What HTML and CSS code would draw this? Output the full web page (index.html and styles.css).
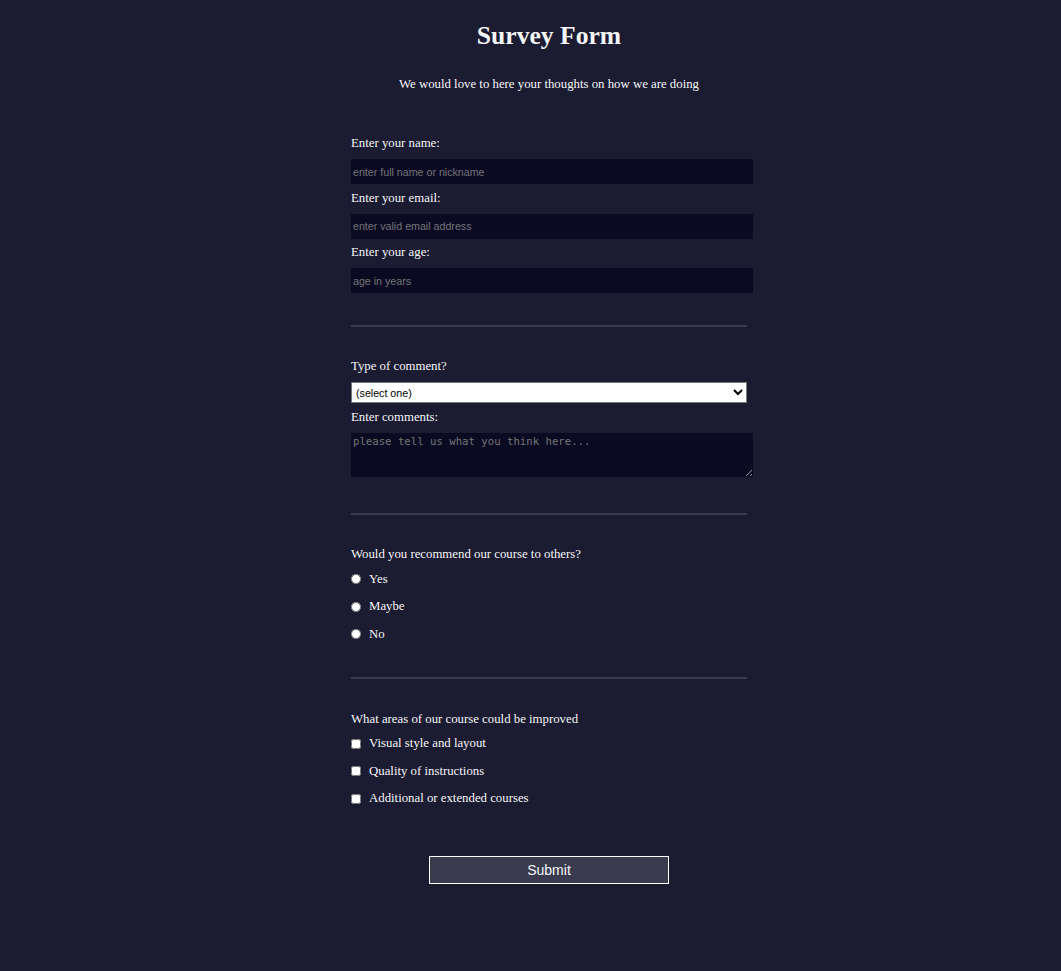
FILE: index.html
```html
<!DOCTYPE html>
<html lang="en">
<head>
<meta charset="utf-8">
<title>Survey Form</title>
<link rel="stylesheet" href="styles.css">
</head>
<body>
<main class="page">
  <h1 class="title">Survey Form</h1>
  <p class="subtitle">We would love to here your thoughts on how we are doing</p>
  <form class="survey">
    <section class="group group-info">
      <label class="field-label" for="name">Enter your name:</label>
      <input class="text-input" id="name" type="text" placeholder="enter full name or nickname">
      <label class="field-label" for="email">Enter your email:</label>
      <input class="text-input" id="email" type="email" placeholder="enter valid email address">
      <label class="field-label" for="age">Enter your age:</label>
      <input class="text-input text-input-last" id="age" type="number" placeholder="age in years">
    </section>
    <hr class="divider">
    <section class="group group-comment">
      <label class="field-label" for="type">Type of comment?</label>
      <select class="select" id="type">
        <option>(select one)</option>
        <option>Compliment</option>
        <option>Suggestion</option>
        <option>Complaint</option>
      </select>
      <label class="field-label" for="comments">Enter comments:</label>
      <textarea class="comments" id="comments" placeholder="please tell us what you think here..."></textarea>
    </section>
    <hr class="divider">
    <section class="group group-radio">
      <p class="question">Would you recommend our course to others?</p>
      <label class="option"><input class="choice" type="radio" name="rec"><span>Yes</span></label>
      <label class="option"><input class="choice" type="radio" name="rec"><span>Maybe</span></label>
      <label class="option"><input class="choice" type="radio" name="rec"><span>No</span></label>
    </section>
    <hr class="divider">
    <section class="group group-check">
      <p class="question">What areas of our course could be improved</p>
      <label class="option"><input class="choice" type="checkbox"><span>Visual style and layout</span></label>
      <label class="option"><input class="choice" type="checkbox"><span>Quality of instructions</span></label>
      <label class="option"><input class="choice" type="checkbox"><span>Additional or extended courses</span></label>
    </section>
    <button class="submit" type="submit">Submit</button>
  </form>
</main>
</body>
</html>
```
FILE: styles.css
```css
html, body {
  margin: 0;
  background: #1b1b32;
}

body {
  color: #f5f6f7;
  font-family: "Liberation Serif", "Times New Roman", serif;
  font-size: 12.8px;
}

.page {
  padding: 21px 0 60px 37px;
  min-height: 100vh;
  box-sizing: border-box;
}

.title {
  margin: 0;
  font-size: 25.6px;
  line-height: 30px;
  font-weight: bold;
  text-align: center;
}

.subtitle {
  margin: 25.5px 0 0;
  line-height: 15px;
  text-align: center;
}

.survey {
  width: 396px;
  margin: 43.5px auto 0;
}

.group {
  display: flex;
  flex-direction: column;
  align-items: flex-start;
}

.group-info { padding-bottom: 32px; }
.group-comment { padding-bottom: 36px; }
.group-radio { padding-bottom: 29.25px; }

.field-label {
  display: block;
  line-height: 16px;
  margin-bottom: 8px;
}

.text-input {
  display: block;
  width: 100%;
  height: 25px;
  padding: 0 4px 0 2px;
  margin: 0 0 5.5px;
  box-sizing: content-box;
  border: none;
  outline: none;
  background: #0a0a23;
  color: #f5f6f7;
  font-family: "Liberation Sans", Arial, sans-serif;
  font-size: 10.67px;
}

.text-input-last { margin-bottom: 0; }

.text-input::placeholder,
.comments::placeholder {
  color: #757575;
}

.divider {
  margin: 0 0 31px;
  height: 0;
  border: none;
  border-top: 2px solid #3b3b4f;
}

.select {
  display: block;
  width: 100%;
  height: 21px;
  margin: 0 0 6px;
  box-sizing: border-box;
  font-family: "Liberation Sans", Arial, sans-serif;
  font-size: 10.67px;
  color: #000;
  background: #fff;
  border: 1px solid #767676;
  border-radius: 0;
}

.comments {
  display: block;
  padding: 2px 4px 2px 2px;
  box-sizing: content-box;
  width: 396px;
  height: 40px;
  margin: 0;
  border: none;
  outline: none;
  background: #0a0a23;
  color: #f5f6f7;
  font-family: "DejaVu Sans Mono", monospace;
  font-size: 10.67px;
}

.question {
  margin: 0 0 3.25px;
  line-height: 16px;
}

.group-check .question { margin: 1px 0 2.75px; }

.option {
  display: flex;
  align-items: center;
  gap: 8px;
  height: 27.5px;
  line-height: 15px;
}

.choice {
  width: 10px;
  height: 10px;
  margin: 0;
}

.submit {
  display: block;
  width: 240px;
  height: 28px;
  margin: 44px auto 0;
  padding: 0;
  border: 1px solid #fff;
  background: #3b3b4f;
  color: #f5f6f7;
  font-family: "Liberation Sans", Arial, sans-serif;
  font-size: 14px;
}
```
